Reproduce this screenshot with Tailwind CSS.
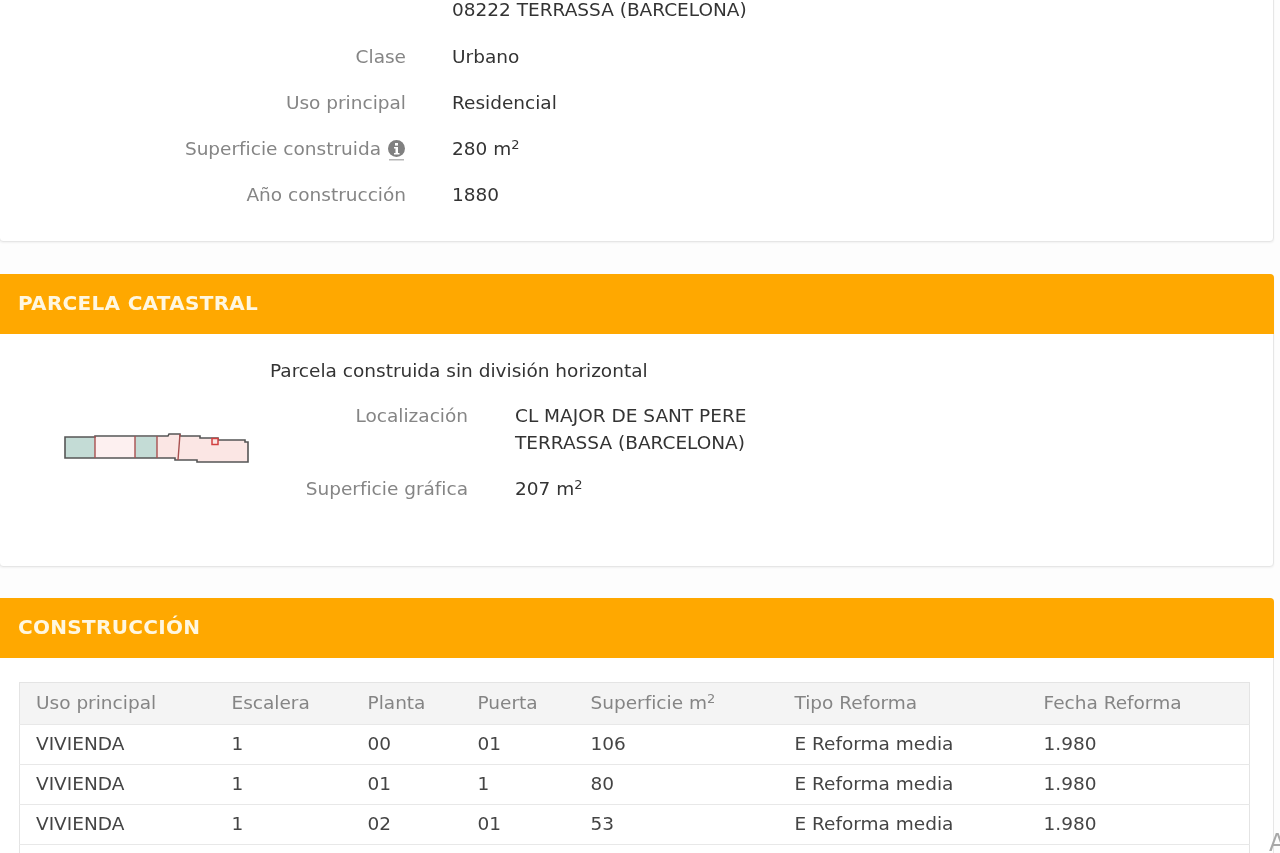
<!DOCTYPE html>
<html lang="es">
<head>
    <meta charset="UTF-8">
    <title>Catastro</title>
    <script src="https://cdn.jsdelivr.net/npm/@tailwindcss/browser@4"></script>
</head>
<body class="bg-[#fdfdfd] font-['DejaVu_Sans',sans-serif] text-[#333] text-[18.5px] overflow-hidden">
<div class="h-[853px] w-[1281px] overflow-hidden relative -ml-px pr-[6px] blur-[0.4px]">

    <!-- Inmueble -->
    <section class="-mt-[14px] bg-white border border-[#e6e6e6] rounded-[4px] pb-[23px] shadow-xs">
        <div class="grid grid-cols-[406px_1fr] gap-x-[46px] auto-rows-[46.3px] items-center">
            <div></div><div>08222 TERRASSA (BARCELONA)</div>
            <div class="text-right text-[#858585]">Clase</div><div>Urbano</div>
            <div class="text-right text-[#858585]">Uso principal</div><div>Residencial</div>
            <div class="text-right text-[#858585] flex justify-end items-center gap-[6px]">Superficie construida
                <svg class="w-[19px] h-[23px] shrink-0 mt-[3px]" viewBox="0 0 19 23"><circle cx="9.5" cy="9.5" r="8.5" fill="#808080"/><rect x="8" y="4" width="3" height="2.600" fill="#fff"/><path d="M7 8h4v6h1.500v1.500h-5.500v-1.500h1.500v-4.500h-1.500z" fill="#fff"/><rect x="2" y="20" width="15" height="1.500" fill="#b5b5b5"/></svg>
            </div>
            <div>280 m<sup class="text-[13px]">2</sup></div>
            <div class="text-right text-[#858585]">Año construcción</div><div>1880</div>
        </div>
    </section>

    <!-- Parcela -->
    <section class="mt-[32px] bg-white border border-[#e6e6e6] rounded-[4px] h-[293px] shadow-xs">
        <h2 class="h-[60px] -mt-px -mr-px bg-[#ffa800] rounded-tr-[4px] flex items-center pl-[18px] pb-[2px] font-bold text-[#fff7e0] text-[20px] tracking-[0.3px]">PARCELA CATASTRAL</h2>
        <div class="flex">
            <div class="w-[270px] shrink-0 pl-[64px] pt-[97px]">
                <svg class="w-[186px] h-[35px]" viewBox="0 0 186 35">
                    <path d="M1 6H31V27H1Z" fill="#c4dcd6"/>
                    <path d="M31 6H71V27H31Z" fill="#fdf0f0"/>
                    <path d="M71 6H93V27H71Z" fill="#c4dcd6"/>
                    <path d="M93 5H104L105 3H116V5H136V7H154V9H181V11H184V31H133V29H111V27H93Z" fill="#fbe6e4"/>
                    <path d="M1 6H31V5H104L105 3H116V5H136V7H154V9H181V11H184V31H133V29H111V27H1Z" fill="none" stroke="#555" stroke-width="1.600"/>
                    <path d="M31 5V27M71 5V27M93 5V27M116 3L114 29" stroke="#a85050" stroke-width="1.400" fill="none"/>
                    <rect x="148" y="7.500" width="6" height="6" fill="#fbe6e4" stroke="#d24040" stroke-width="1.500"/>
                </svg>
            </div>
            <div>
                <p class="mt-[23px] leading-[27px] whitespace-nowrap">Parcela construida sin división horizontal</p>
                <div class="mt-[18px] grid grid-cols-[198px_1fr] gap-x-[47px] gap-y-[19px]">
                    <div class="text-right text-[#858585] leading-[27px]">Localización</div>
                    <div class="leading-[27px]">CL MAJOR DE SANT PERE<br>TERRASSA (BARCELONA)</div>
                    <div class="text-right text-[#858585] leading-[27px] whitespace-nowrap">Superficie gráfica</div>
                    <div class="leading-[27px]">207 m<sup class="text-[13px]">2</sup></div>
                </div>
            </div>
        </div>
    </section>

    <!-- Construccion -->
    <section class="mt-[31px] bg-white border border-[#e6e6e6] rounded-[4px] h-[400px]">
        <h2 class="h-[60px] -mt-px -mr-px bg-[#ffa800] rounded-tr-[4px] flex items-center pl-[18px] pb-[2px] font-bold text-[#fff7e0] text-[20px] tracking-[0.3px]">CONSTRUCCIÓN</h2>
        <div class="pt-[24px] pl-[19px] pr-[24px]">
            <table class="w-[1230px] table-fixed border border-[#e4e4e4] text-left">
                <colgroup>
                    <col class="w-[196px]"><col class="w-[136px]"><col class="w-[110px]"><col class="w-[113px]"><col class="w-[204px]"><col class="w-[249px]"><col class="w-[222px]">
                </colgroup>
                <thead class="bg-[#f4f4f4] text-[#858585]">
                    <tr class="h-[42px]">
                        <th class="font-normal pl-[16px] pb-[2px]">Uso principal</th>
                        <th class="font-normal pl-[16px] pb-[2px]">Escalera</th>
                        <th class="font-normal pl-[16px] pb-[2px]">Planta</th>
                        <th class="font-normal pl-[16px] pb-[2px]">Puerta</th>
                        <th class="font-normal pl-[16px] pb-[2px]">Superficie m<sup class="text-[13px]">2</sup></th>
                        <th class="font-normal pl-[16px] pb-[2px]">Tipo Reforma</th>
                        <th class="font-normal pl-[16px] pb-[2px]">Fecha Reforma</th>
                    </tr>
                </thead>
                <tbody class="text-[#444]">
                    <tr class="h-[40px] border-t border-[#e8e8e8]">
                        <td class="pl-[16px] pb-[2px]">VIVIENDA</td><td class="pl-[16px] pb-[2px]">1</td><td class="pl-[16px] pb-[2px]">00</td><td class="pl-[16px] pb-[2px]">01</td><td class="pl-[16px] pb-[2px]">106</td><td class="pl-[16px] pb-[2px]">E Reforma media</td><td class="pl-[16px] pb-[2px]">1.980</td>
                    </tr>
                    <tr class="h-[40px] border-t border-[#e8e8e8]">
                        <td class="pl-[16px] pb-[2px]">VIVIENDA</td><td class="pl-[16px] pb-[2px]">1</td><td class="pl-[16px] pb-[2px]">01</td><td class="pl-[16px] pb-[2px]">1</td><td class="pl-[16px] pb-[2px]">80</td><td class="pl-[16px] pb-[2px]">E Reforma media</td><td class="pl-[16px] pb-[2px]">1.980</td>
                    </tr>
                    <tr class="h-[40px] border-t border-[#e8e8e8]">
                        <td class="pl-[16px] pb-[2px]">VIVIENDA</td><td class="pl-[16px] pb-[2px]">1</td><td class="pl-[16px] pb-[2px]">02</td><td class="pl-[16px] pb-[2px]">01</td><td class="pl-[16px] pb-[2px]">53</td><td class="pl-[16px] pb-[2px]">E Reforma media</td><td class="pl-[16px] pb-[2px]">1.980</td>
                    </tr>
                    <tr class="h-[40px] border-t border-[#e8e8e8]"><td colspan="7"></td></tr>
                </tbody>
            </table>
        </div>
    </section>

    <span class="absolute left-[1270px] top-[829px] text-[24px] leading-[28px] text-[#a8a8a8]">A</span>
</div>
</body>
</html>
